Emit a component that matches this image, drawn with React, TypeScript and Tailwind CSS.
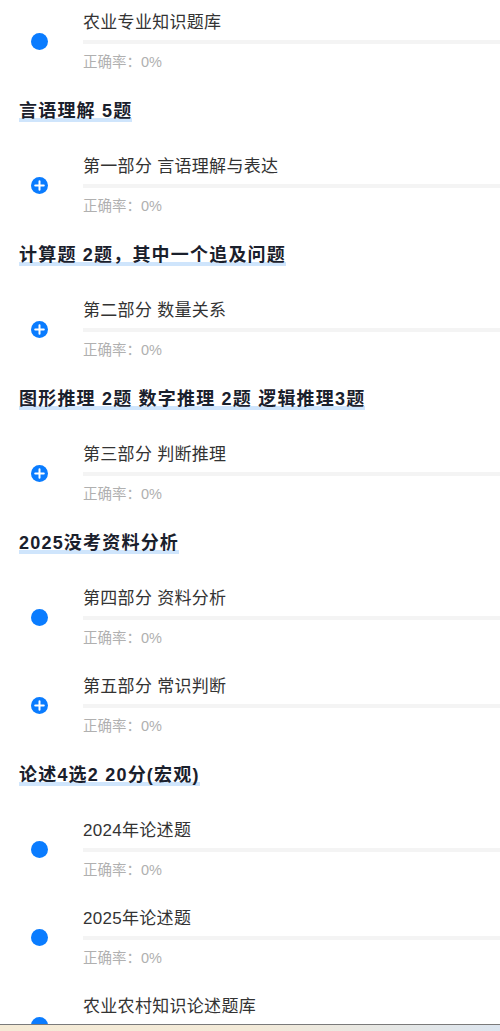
import React from "react";

type Item = { title: string; plus: boolean };
type Block = { heading?: string; items: Item[] };

const blocks: Block[] = [
  { items: [{ title: "农业专业知识题库", plus: false }] },
  { heading: "言语理解 5题", items: [{ title: "第一部分 言语理解与表达", plus: true }] },
  { heading: "计算题 2题，其中一个追及问题", items: [{ title: "第二部分 数量关系", plus: true }] },
  { heading: "图形推理 2题 数字推理 2题 逻辑推理3题", items: [{ title: "第三部分 判断推理", plus: true }] },
  {
    heading: "2025没考资料分析",
    items: [
      { title: "第四部分 资料分析", plus: false },
      { title: "第五部分 常识判断", plus: true },
    ],
  },
  {
    heading: "论述4选2 20分(宏观)",
    items: [
      { title: "2024年论述题", plus: false },
      { title: "2025年论述题", plus: false },
      { title: "农业农村知识论述题库", plus: false },
    ],
  },
];

function Icon({ plus }: { plus: boolean }) {
  if (plus) {
    return (
      <svg width="17" height="17" viewBox="0 0 17 17" className="block">
        <circle cx="8.5" cy="8.5" r="8.5" fill="#0a7cff" />
        <path d="M8.5 4.2v8.6M4.2 8.5h8.6" stroke="#fff" strokeWidth="2" strokeLinecap="round" />
      </svg>
    );
  }
  return <div className="w-[17px] h-[17px] rounded-full bg-[#0a7cff]" />;
}

function Row({ item }: { item: Item }) {
  return (
    <div className="flex h-[88px] shrink-0">
      <div className="w-[83px] shrink-0 flex items-center pl-[31px] pt-[10px] pb-[16px]">
        <Icon plus={item.plus} />
      </div>
      <div className="flex-1 flex flex-col pt-[11px]">
        <div className="text-[17px] leading-[24px] text-[#333333] whitespace-nowrap tracking-[0.3px]">{item.title}</div>
        <div className="mt-[5px] h-[4px] bg-[#f4f4f4]" />
        <div className="mt-[8px] text-[14.5px] leading-[20px] text-[#b0b0b0] whitespace-nowrap">正确率：0%</div>
      </div>
    </div>
  );
}

export default function App() {
  return (
    <div
      className="w-[500px] h-[1031px] overflow-hidden flex flex-col bg-white"
      style={{ fontFamily: '"Liberation Sans", "Noto Sans CJK SC", sans-serif' }}
    >
      <div className="flex-1 overflow-hidden flex flex-col">
        {blocks.map((b, i) => (
          <React.Fragment key={i}>
            {b.heading && (
              <div className="h-[56px] shrink-0 pt-[9px] pl-[19px]">
                <span className="inline-block text-[18px] leading-[28px] font-bold tracking-[1.2px] text-[#1a202c] whitespace-nowrap bg-[linear-gradient(to_top,transparent_3px,#cfe5fc_3px,#cfe5fc_7px,transparent_7px)]">
                  {b.heading}
                </span>
              </div>
            )}
            {b.items.map((it, j) => (
              <Row key={j} item={it} />
            ))}
          </React.Fragment>
        ))}
      </div>
      <div className="h-[7px] shrink-0 border-t border-[#7a7a7a] bg-[linear-gradient(to_right,#f5ebd6,#f3ead8_50%,#dce5ef)]" />
    </div>
  );
}
